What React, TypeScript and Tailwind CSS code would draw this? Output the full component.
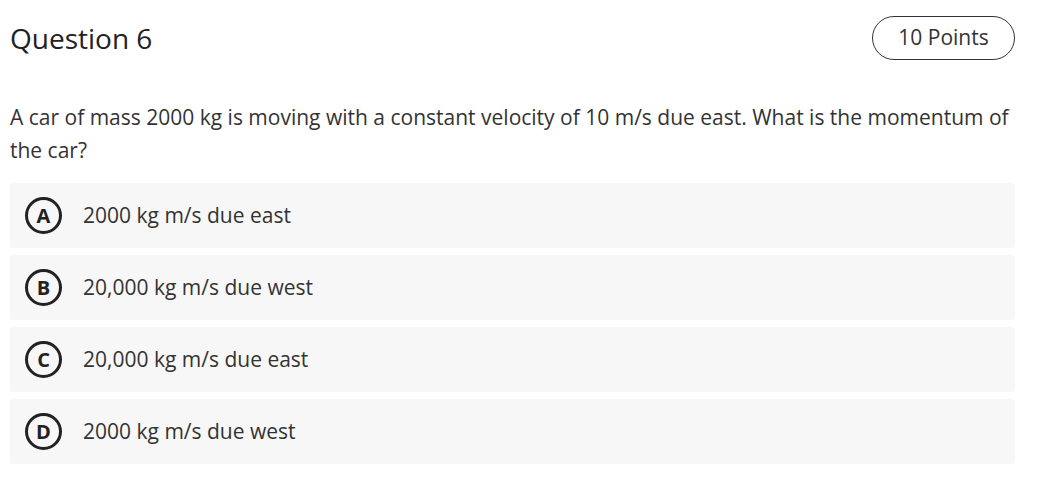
import React from "react";

const options = [
  { letter: "A", text: "2000 kg m/s due east" },
  { letter: "B", text: "20,000 kg m/s due west" },
  { letter: "C", text: "20,000 kg m/s due east" },
  { letter: "D", text: "2000 kg m/s due west" },
];

export default function App() {
  return (
    <div
      className="w-[1042px] h-[484px] bg-white text-[#333333] pl-[10px] pr-[27px]"
      style={{ fontFamily: '"Open Sans", sans-serif' }}
    >
      <div className="flex items-center justify-between h-[76px]">
        <h1 className="text-[28px] font-medium text-[#222222] leading-none">Question 6</h1>
        <div className="h-[44px] w-[143px] rounded-full border border-[#333333] flex items-center justify-center text-[21px] font-medium text-[#333333]">
          10 Points
        </div>
      </div>
      <p className="mt-[25px] text-[21px] leading-[33px] text-[#333333]">
        A car of mass 2000 kg is moving with a constant velocity of 10 m/s due east. What is the momentum of the car?
      </p>
      <div className="mt-[16px] flex flex-col gap-[7px]">
        {options.map((o) => (
          <div
            key={o.letter}
            className="h-[65px] rounded-[3px] bg-[#f7f7f7] flex items-center pl-[15px]"
          >
            <div className="w-[37px] h-[37px] rounded-full border-[3px] border-[#222222] flex items-center justify-center text-[20px] font-bold text-[#222222] leading-none">
              {o.letter}
            </div>
            <span className="ml-[21px] text-[21px] text-[#333333]">{o.text}</span>
          </div>
        ))}
      </div>
    </div>
  );
}
